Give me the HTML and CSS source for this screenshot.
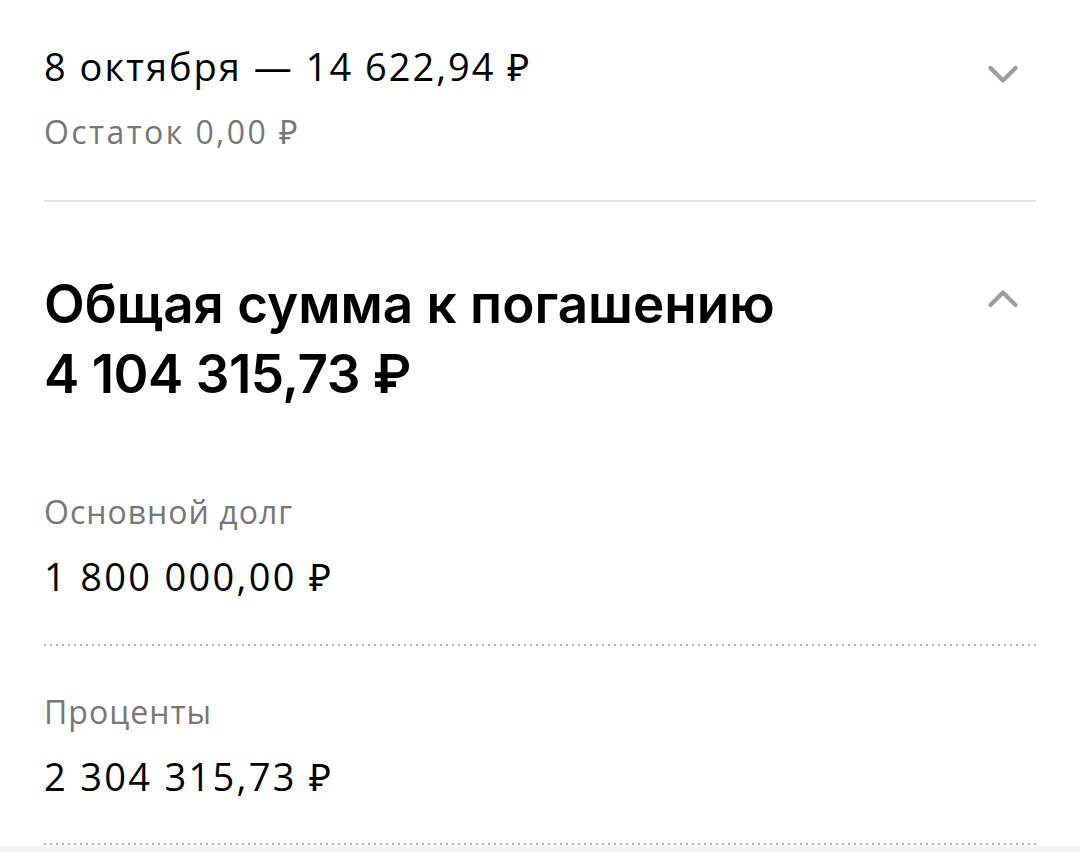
FILE: index.html
```html
<!DOCTYPE html>
<html lang="ru">
<head>
<meta charset="utf-8">
<link rel="stylesheet" href="styles.css">
</head>
<body>
<div class="page">
  <section class="row payment">
    <div class="col">
      <div class="pay-title">8 октября — 14 622,94 ₽</div>
      <div class="pay-sub">Остаток 0,00 ₽</div>
    </div>
    <svg class="chev" width="30" height="20" viewBox="0 0 30 20"><path d="M2.5 3 L15 15.5 L27.5 3" fill="none" stroke="#9e9e9e" stroke-width="4.2" stroke-linecap="round" stroke-linejoin="round"/></svg>
  </section>
  <div class="divider"></div>
  <section class="row total">
    <div class="col">
      <div class="total-title">Общая сумма к погашению</div>
      <div class="total-amount">4 104 315,73 ₽</div>
    </div>
    <svg class="chev" width="30" height="20" viewBox="0 0 30 20"><path d="M2.5 17 L15 4.5 L27.5 17" fill="none" stroke="#9e9e9e" stroke-width="4.2" stroke-linecap="round" stroke-linejoin="round"/></svg>
  </section>
  <div class="item">
    <div class="item-label">Основной долг</div>
    <div class="item-value">1 800 000,00 ₽</div>
  </div>
  <div class="dots"></div>
  <div class="item">
    <div class="item-label">Проценты</div>
    <div class="item-value">2 304 315,73 ₽</div>
  </div>
  <div class="dots last"></div>
</div>
<div class="bottom"></div>
</body>
</html>
```

FILE: styles.css
```css
html, body {
  margin: 0;
  padding: 0;
  background: #fff;
}
body {
  font-family: "Open Sans", "Noto Sans", sans-serif;
  color: #000;
  width: 1080px;
  height: 852px;
  overflow: hidden;
  display: flex;
  flex-direction: column;
}
.page {
  padding: 0 44px;
  display: flex;
  flex-direction: column;
}
.row {
  display: flex;
  justify-content: space-between;
  align-items: flex-start;
}
.col {
  display: flex;
  flex-direction: column;
}
.payment {
  padding-top: 41px;
  padding-bottom: 46px;
}
.payment .chev {
  margin-top: 24px;
  margin-right: 18px;
}
.pay-title {
  font-size: 38px;
  line-height: 50px;
  letter-spacing: 2px;
}
.pay-sub {
  font-size: 32px;
  line-height: 44px;
  letter-spacing: 2.4px;
  color: #777;
  margin-top: 19px;
}
.divider {
  height: 2px;
  background: #e2e2e2;
}
.total {
  padding-top: 67px;
}
.total .chev {
  margin-top: 19px;
  margin-right: 18px;
}
.total-title, .total-amount {
  font-family: Inter, "Noto Sans", sans-serif;
  font-weight: 600;
  font-size: 53px;
  line-height: 70px;
}
.total-amount {
  letter-spacing: -0.5px;
}
.item {
  display: flex;
  flex-direction: column;
}
.total + .item { margin-top: 81px; }
.item-label {
  font-size: 32px;
  line-height: 44px;
  letter-spacing: 1px;
  color: #777;
}
.item-value {
  font-size: 38px;
  line-height: 50px;
  letter-spacing: 2.3px;
  margin-top: 17px;
}
.dots {
  height: 2px;
  margin-top: 43px;
  margin-bottom: 44px;
  background-image: repeating-linear-gradient(90deg, #b5b5b5 0 2px, transparent 2px 6px);
}
.dots.last {
  margin-top: 42px;
  margin-bottom: 1px;
}
.bottom {
  flex: 1;
  background: #f3f3f3;
}
```
